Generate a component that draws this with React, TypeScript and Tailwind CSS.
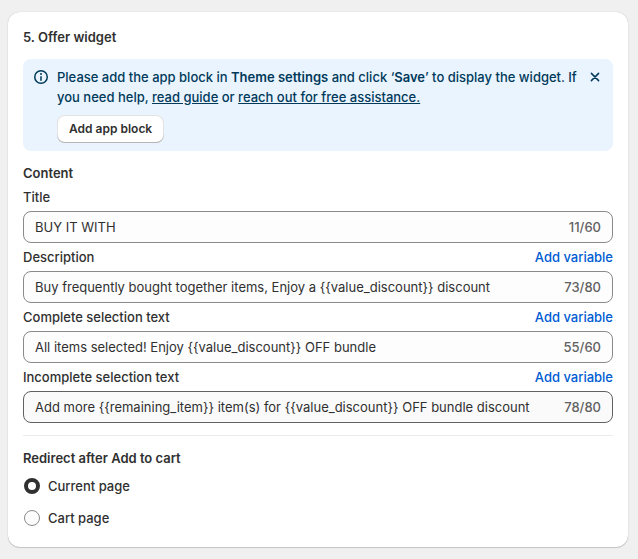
import React, { useState } from "react";
import clsx from "clsx";

type TextFieldProps = {
  id: string;
  label: string;
  initialValue: string;
  counter: string;
  hasVariable?: boolean;
  active?: boolean;
};

const fields: TextFieldProps[] = [
  { id: "title", label: "Title", initialValue: "BUY IT WITH", counter: "11/60" },
  {
    id: "description",
    label: "Description",
    initialValue: "Buy frequently bought together items, Enjoy a {{value_discount}} discount",
    counter: "73/80",
    hasVariable: true,
  },
  {
    id: "complete",
    label: "Complete selection text",
    initialValue: "All items selected! Enjoy {{value_discount}} OFF bundle",
    counter: "55/60",
    hasVariable: true,
  },
  {
    id: "incomplete",
    label: "Incomplete selection text",
    initialValue: "Add more {{remaining_item}} item(s) for {{value_discount}} OFF bundle discount",
    counter: "78/80",
    hasVariable: true,
    active: true,
  },
];

const redirectOptions = [
  { value: "current", label: "Current page" },
  { value: "cart", label: "Cart page" },
];

function TextField({ id, label, initialValue, counter, hasVariable, active }: TextFieldProps) {
  const [value, setValue] = useState(initialValue);

  return (
    <div className="flex flex-col gap-1">
      <div className="flex justify-between">
        <label htmlFor={id}>{label}</label>
        {hasVariable && (
          <button type="button" className="font-medium text-[#005bd3]">
            Add variable
          </button>
        )}
      </div>
      <div
        className={clsx(
          "flex h-8 items-center gap-2 rounded-lg border px-[11px]",
          active ? "border-[#616161] bg-[#fafafa]" : "border-[#8a8a8a] bg-[#fdfdfd]"
        )}
      >
        <input
          id={id}
          type="text"
          value={value}
          onChange={(e) => setValue(e.target.value)}
          className="min-w-0 flex-1 bg-transparent font-normal outline-none"
        />
        <span className="text-[#616161]">{counter}</span>
      </div>
    </div>
  );
}

function InfoBanner() {
  return (
    <div className="flex items-start rounded-lg bg-[#eaf4ff] p-2 text-[#003a5a]">
      <svg viewBox="0 0 20 20" className="h-5 w-5 shrink-0" fill="currentColor" aria-hidden="true">
        <path d="M10 14a.75.75 0 0 1-.75-.75v-3.5a.75.75 0 0 1 1.5 0v3.5a.75.75 0 0 1-.75.75Z" />
        <path d="M9 7a1 1 0 1 1 2 0 1 1 0 0 1-2 0Z" />
        <path
          fillRule="evenodd"
          d="M17 10a7 7 0 1 1-14 0 7 7 0 0 1 14 0Zm-1.5 0a5.5 5.5 0 1 1-11 0 5.5 5.5 0 0 1 11 0Z"
        />
      </svg>
      <div className="ml-1.5 flex min-w-0 flex-1 flex-col items-start gap-2">
        <p>
          Please add the app block in <strong className="font-semibold">Theme settings</strong> and click ‘
          <strong className="font-semibold">Save</strong>’ to display the widget. If you need help,{" "}
          <a href="#guide" className="underline">
            read guide
          </a>{" "}
          or{" "}
          <a href="#support" className="underline">
            reach out for free assistance.
          </a>
        </p>
        <button
          type="button"
          className="h-7 rounded-lg bg-white px-3 text-xs font-semibold text-[#303030] shadow-[inset_0_-1px_0_#b5b5b5,inset_0_0_0_1px_#e3e3e3]"
        >
          Add app block
        </button>
      </div>
      <button type="button" aria-label="Dismiss" className="flex h-5 w-5 shrink-0 items-center justify-center">
        <svg viewBox="0 0 16 16" className="h-4 w-4" fill="none" stroke="currentColor" strokeWidth="1.5" strokeLinecap="round">
          <path d="M4.4 4.4l7.2 7.2M11.6 4.4l-7.2 7.2" />
        </svg>
      </button>
    </div>
  );
}

export default function App() {
  const [redirect, setRedirect] = useState("current");

  return (
    <main className="min-h-screen bg-[#f0f0f0] py-3 pr-2.5 pl-2 font-['Inter',sans-serif] text-[13px] leading-5 font-[450] text-[#303030]">
      <section className="flex flex-col gap-3 rounded-xl bg-white p-[15px] shadow-[0_1px_1px_#00000028,0_0_1px_#00000048]">
        <h2 className="font-semibold">5. Offer widget</h2>

        <InfoBanner />

        <div className="flex flex-col gap-1">
          <h3 className="font-semibold">Content</h3>
          {fields.map((field) => (
            <TextField key={field.id} {...field} />
          ))}
        </div>

        <hr className="border-[#ebebeb]" />

        <fieldset>
          <legend className="mb-1 font-semibold">Redirect after Add to cart</legend>
          <div className="flex flex-col items-start gap-1">
            {redirectOptions.map((option) => (
              <label key={option.value} className="flex items-center gap-2 py-1 pl-px">
                <input
                  type="radio"
                  name="redirect"
                  value={option.value}
                  checked={redirect === option.value}
                  onChange={() => setRedirect(option.value)}
                  className="h-4 w-4 appearance-none rounded-full border border-[#8a8a8a] bg-[#fdfdfd] checked:border-4 checked:border-[#303030] checked:bg-white"
                />
                {option.label}
              </label>
            ))}
          </div>
        </fieldset>
      </section>
    </main>
  );
}
